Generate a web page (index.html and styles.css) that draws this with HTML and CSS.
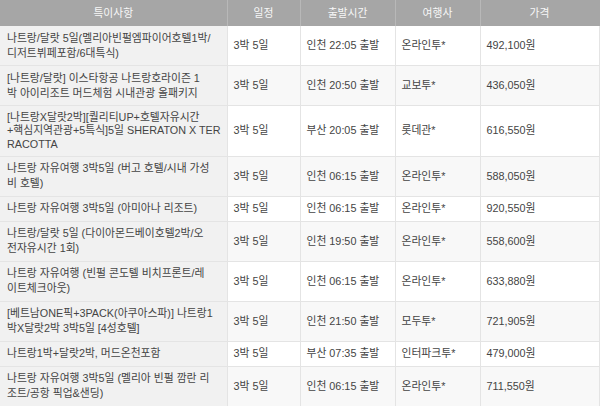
FILE: index.html
```html
<!DOCTYPE html>
<html lang="ko">
<head>
<meta charset="utf-8">
<title>여행 상품</title>
<link rel="stylesheet" href="styles.css">
</head>
<body>
<table class="tour">
  <colgroup>
    <col class="c-note">
    <col class="c-sched">
    <col class="c-dep">
    <col class="c-agent">
    <col class="c-price">
  </colgroup>
  <thead>
    <tr><th>특이사항</th><th>일정</th><th>출발시간</th><th>여행사</th><th>가격</th></tr>
  </thead>
  <tbody>
    <tr><td class="note">나트랑/달랏 5일(멜리아빈펄엠파이어호텔1박/<br>디저트뷔페포함/6대특식)</td><td>3박 5일</td><td>인천 22:05 출발</td><td>온라인투*</td><td>492,100원</td></tr>
    <tr><td class="note">[나트랑/달랏] 이스타항공 나트랑호라이즌 1<br>박 아이리조트 머드체험 시내관광 올패키지</td><td>3박 5일</td><td>인천 20:50 출발</td><td>교보투*</td><td>436,050원</td></tr>
    <tr><td class="note tight">[나트랑X달랏2박][퀄리티UP+호텔자유시간<br>+핵심지역관광+5특식]5일 SHERATON X TER<br>RACOTTA</td><td>3박 5일</td><td>부산 20:05 출발</td><td>롯데관*</td><td>616,550원</td></tr>
    <tr><td class="note">나트랑 자유여행 3박5일 (버고 호텔/시내 가성<br>비 호텔)</td><td>3박 5일</td><td>인천 06:15 출발</td><td>온라인투*</td><td>588,050원</td></tr>
    <tr><td class="note">나트랑 자유여행 3박5일 (아미아나 리조트)</td><td>3박 5일</td><td>인천 06:15 출발</td><td>온라인투*</td><td>920,550원</td></tr>
    <tr><td class="note">나트랑/달랏 5일 (다이아몬드베이호텔2박/오<br>전자유시간 1회)</td><td>3박 5일</td><td>인천 19:50 출발</td><td>온라인투*</td><td>558,600원</td></tr>
    <tr><td class="note">나트랑 자유여행 (빈펄 콘도텔 비치프론트/레<br>이트체크아웃)</td><td>3박 5일</td><td>인천 06:15 출발</td><td>온라인투*</td><td>633,880원</td></tr>
    <tr><td class="note">[베트남ONE픽+3PACK(아쿠아스파)] 나트랑1<br>박X달랏2박 3박5일 [4성호텔]</td><td>3박 5일</td><td>인천 21:50 출발</td><td>모두투*</td><td>721,905원</td></tr>
    <tr><td class="note">나트랑1박+달랏2박, 머드온천포함</td><td>3박 5일</td><td>부산 07:35 출발</td><td>인터파크투*</td><td>479,000원</td></tr>
    <tr><td class="note">나트랑 자유여행 3박5일 (멜리아 빈펄 깜란 리<br>조트/공항 픽업&amp;샌딩)</td><td>3박 5일</td><td>인천 06:15 출발</td><td>온라인투*</td><td>711,550원</td></tr>
  </tbody>
</table>
</body>
</html>
```
FILE: styles.css
```css
html, body {
  margin: 0;
  padding: 0;
  background: #ffffff;
}

.tour {
  width: 599px;
  border-collapse: collapse;
  table-layout: fixed;
  font-family: "Liberation Sans", "Noto Sans CJK KR", sans-serif;
  font-size: 10.8px;
  color: #444444;
}

.c-note { width: 227px; }
.c-sched { width: 73px; }
.c-dep { width: 95px; }
.c-agent { width: 85px; }
.c-price { width: 119px; }

.tour th {
  background: #a6a6a6;
  color: #f7f7f7;
  font-weight: normal;
  font-size: 10.8px;
  line-height: 16px;
  padding: 5px 4px;
  text-align: center;
  border-right: 1px solid #b8b8b8;
}

.tour th:last-child {
  border-right: 1px solid #a6a6a6;
}

.tour td {
  line-height: 15px;
  padding: 4.5px 5px 4.5px 6px;
  vertical-align: middle;
  white-space: nowrap;
  overflow: hidden;
  border-bottom: 1px solid #e4e4e4;
  border-right: 1px solid #e4e4e4;
  background: #ffffff;
}

.tour tbody tr:nth-child(even) td {
  background: #f8f8f8;
}

.tour td.note,
.tour tbody tr:nth-child(even) td.note {
  background: #f1f1f1;
  padding-left: 7px;
}

.tour td.tight {
  line-height: 13.5px;
}
```
